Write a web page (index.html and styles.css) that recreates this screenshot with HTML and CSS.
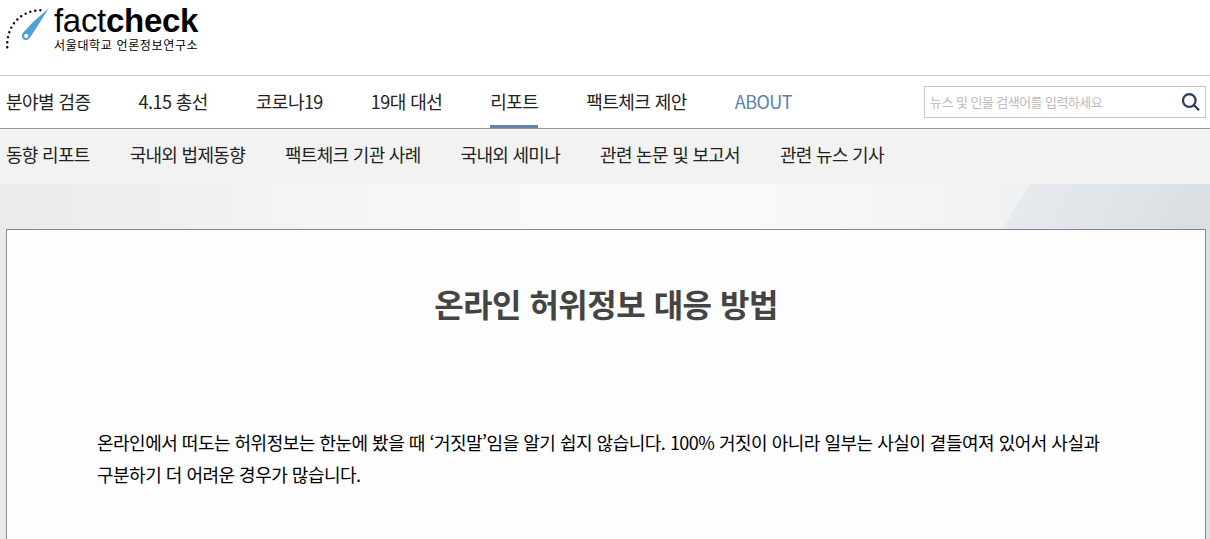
FILE: index.html
```html
<!DOCTYPE html>
<html lang="ko">
<head>
  <meta charset="UTF-8" />
  <meta name="viewport" content="width=device-width, initial-scale=1.0"/>
  <title>온라인 허위정보 대응 방법 | factcheck</title>
  <link rel="stylesheet" href="styles.css">
</head>
<body>
  <header class="header">
    <a class="logo" href="#">
      <svg class="logo-mark" width="49" height="50" viewBox="0 0 49 50">
        <path class="dots" pathLength="11.02" d="M7.3 47.3 C6 28 19 10.5 40.5 10.3"/>
        <path fill="#4f9fd8" d="M48.8 8.2 L36 28.5 L30 37.5 A4.3 4.3 0 1 1 22.6 33.2 L33 22 Z"/>
        <circle cx="26.2" cy="35.9" r="2.1" fill="#fff"/>
      </svg>
      <span class="logo-text">
        <span class="logo-name">fact<b>check</b></span>
        <span class="logo-sub">서울대학교 언론정보연구소</span>
      </span>
    </a>
  </header>

  <nav class="main-nav">
    <ul class="menu">
      <li><a href="#">분야별 검증</a></li>
      <li><a href="#">4.15 총선</a></li>
      <li><a href="#">코로나19</a></li>
      <li><a href="#">19대 대선</a></li>
      <li><a class="active" href="#">리포트</a></li>
      <li><a href="#">팩트체크 제안</a></li>
      <li><a class="about" href="#">ABOUT</a></li>
    </ul>
    <form class="search">
      <input type="text" placeholder="뉴스 및 인물 검색어를 입력하세요">
      <button type="button" aria-label="검색">
        <svg width="18" height="18" viewBox="0 0 18 18">
          <circle cx="7.3" cy="7.5" r="6.3"/>
          <path d="M11.8 12 L17 17.2"/>
        </svg>
      </button>
    </form>
  </nav>

  <nav class="sub-nav">
    <a href="#">동향 리포트</a>
    <a href="#">국내외 법제동향</a>
    <a href="#">팩트체크 기관 사례</a>
    <a href="#">국내외 세미나</a>
    <a href="#">관련 논문 및 보고서</a>
    <a href="#">관련 뉴스 기사</a>
  </nav>

  <main class="content">
    <article class="report">
      <h1>온라인 허위정보 대응 방법</h1>
      <p>온라인에서 떠도는 허위정보는 한눈에 봤을 때 ‘거짓말’임을 알기 쉽지 않습니다. 100% 거짓이 아니라 일부는 사실이 곁들여져 있어서 사실과 구분하기 더 어려운 경우가 많습니다.</p>
    </article>
  </main>
</body>
</html>
```
FILE: styles.css
```css
* {
  box-sizing: border-box;
}

body {
  margin: 0;
  height: 100vh;
  display: flex;
  flex-direction: column;
  overflow: hidden;
  background: #fff;
  color: #222;
  font-family: "Noto Sans CJK KR", sans-serif;
  font-size: 18px;
  letter-spacing: -0.5px;
}

a {
  color: inherit;
  text-decoration: none;
}

.header {
  height: 75px;
  flex-shrink: 0;
}

.logo {
  display: flex;
  width: 210px;
  color: #000;
}

.logo-mark {
  flex-shrink: 0;
}

.dots {
  fill: none;
  stroke: #000;
  stroke-width: 2.4;
  stroke-linecap: round;
  stroke-dasharray: 0 1;
}

.logo-text {
  display: flex;
  flex-direction: column;
  padding: 4px 0 0 5px;
  white-space: nowrap;
}

.logo-name {
  font-family: "Liberation Sans", Arial, sans-serif;
  font-size: 33px;
  line-height: 34px;
  letter-spacing: -0.3px;
}

.logo-sub {
  font-size: 12px;
  line-height: 14px;
  letter-spacing: 0.65px;
}

.main-nav {
  display: flex;
  justify-content: space-between;
  height: 54px;
  flex-shrink: 0;
  padding: 0 4px 0 6px;
  border-top: 1px solid #ccc;
  border-bottom: 1px solid #9298a3;
}

.menu {
  display: flex;
  gap: 48px;
  margin: 0;
  padding: 0;
  list-style: none;
  letter-spacing: -0.55px;
}

.menu a {
  display: block;
  height: 52px;
  line-height: 50px;
}

.menu .active {
  border-bottom: 3px solid #6682a8;
}

.menu .about {
  color: #5b7fae;
}

.search {
  display: flex;
  align-items: center;
  width: 282px;
  height: 32px;
  margin-top: 10px;
  padding: 0 5px;
  border: 1px solid #c8c8c8;
}

.search input {
  flex: 1;
  padding: 0 0 2px;
  border: 0;
  outline: 0;
  font-family: inherit;
  font-size: 13px;
  letter-spacing: -0.55px;
}

.search input::placeholder {
  color: #bbb;
}

.search button {
  display: flex;
  padding: 0;
  border: 0;
  background: none;
}

.search svg {
  fill: none;
  stroke: #263c60;
  stroke-width: 2.2;
}

.sub-nav {
  display: flex;
  gap: 40px;
  height: 55px;
  flex-shrink: 0;
  padding-left: 6px;
  line-height: 50px;
  letter-spacing: -0.7px;
  background: #f2f2f2;
}

.content {
  flex: 1;
  display: flex;
  padding: 45px 4px 0 6px;
  background: linear-gradient(121deg, transparent 72.3%, #e6eaee 72.4%, #d9dfe3 85%),
              linear-gradient(90deg, #e9eaec 0%, #f3f4f5 25%, #fafafa 50%, #f8f9fa 62%, #eff1f3 84%);
}

.report {
  flex: 1;
  padding: 51px 90px 0;
  border: 1px solid #85878a;
  border-bottom: 0;
  background: #fdfdfd;
}

.report h1 {
  margin: 0 0 101px;
  color: #444;
  font-size: 32px;
  line-height: 44px;
  letter-spacing: -0.5px;
  text-align: center;
}

.report p {
  margin: 0;
  color: #000;
  line-height: 32px;
}
```
